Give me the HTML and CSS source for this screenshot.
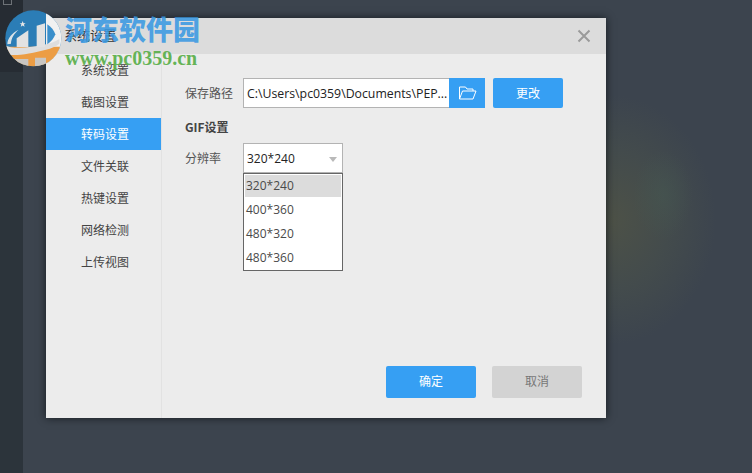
FILE: index.html
```html
<!DOCTYPE html>
<html lang="zh">
<head>
<meta charset="utf-8">
<title>系统设置</title>
<link rel="stylesheet" href="styles.css">
</head>
<body>
<div class="desktop">
  <aside class="strip"><div class="strip-top"><span class="strip-icon"></span></div></aside>
  <main class="stage">
    <div class="glow"></div>
    <div class="glow glow-inner"></div>
    <section class="dialog">
      <header class="dialog-head">
        <h1 class="dialog-title">系统设置</h1>
        <svg class="close" width="14" height="14" viewBox="0 0 14 14"><path d="M1.500 1.500l11 11M12.500 1.500l-11 11" stroke="#9a9a9a" stroke-width="2" fill="none"/></svg>
      </header>
      <div class="dialog-body">
        <nav class="side">
          <a class="side-item">系统设置</a>
          <a class="side-item">截图设置</a>
          <a class="side-item active">转码设置</a>
          <a class="side-item">文件关联</a>
          <a class="side-item">热键设置</a>
          <a class="side-item">网络检测</a>
          <a class="side-item">上传视图</a>
        </nav>
        <div class="content">
          <div class="row path-row">
            <span class="label">保存路径</span>
            <div class="path-box">C:\Users\pc0359\Documents\PEP...</div>
            <button class="folder-btn">
              <svg width="19" height="14" viewBox="0 0 19 14"><path d="M1.500 13V1h6l1.500 2h6v2M1.500 13L4.500 5H18l-3 8z" fill="none" stroke="#fff" stroke-width="1"/></svg>
            </button>
            <button class="btn btn-primary change">更改</button>
          </div>
          <h2 class="section">GIF设置</h2>
          <div class="row res-row">
            <span class="label">分辨率</span>
            <div class="select-wrap">
              <div class="select">320*240<i class="caret"></i></div>
              <ul class="menu">
                <li class="menu-item current">320*240</li>
                <li class="menu-item">400*360</li>
                <li class="menu-item">480*320</li>
                <li class="menu-item">480*360</li>
              </ul>
            </div>
          </div>
          <footer class="actions">
            <button class="btn btn-primary wide">确定</button>
            <button class="btn btn-muted wide">取消</button>
          </footer>
        </div>
      </div>
    </section>
  </main>
  <div class="mark">
    <svg class="mark-logo" width="70" height="65" viewBox="0 0 210 195">
      <defs><clipPath id="disc"><circle cx="100" cy="100" r="84"/></clipPath></defs>
      <g clip-path="url(#disc)">
        <rect width="210" height="195" fill="#2b7db6"/>
        <rect x="138" y="0" width="72" height="195" fill="#f1f1f1"/>
        <path d="M0 125h210v75H0z" fill="#ec9d44"/>
        <path d="M45 162h40v35H45z" fill="#c9c6c2"/>
        <path d="M105 158h33v40h-33z" fill="#c9c6c2"/>
        <path d="M14 118C30 134 85 130 138 118c14-3 28-8 40-16v14c-10 8-24 14-40 18-36 9-80 18-104 16-10-2-18-12-20-32z" fill="#dedede"/>
        <path d="M22 118c0-18 14-34 34-44-14 12-23 26-23 42z" fill="#d9e2e8"/>
        <path d="M50 100L85 76v50H50z" fill="#e2e2e2"/>
        <path d="M110 62l25-7v71h-25z" fill="#e2e2e2"/>
        <path d="M142 58c12 8 20 18 24 30-4 12-12 22-24 30z" fill="#3a8fcb"/>
        <path d="M68 48l2.500 6.500 6.500.2-5.100 4.100 1.800 6.400-5.700-3.700-5.700 3.700 1.800-6.400-5.100-4.100 6.500-.2z" fill="#e6e6e6"/>
      </g>
    </svg>
    <div class="mark-text">
      <span class="mark-name">河东软件园</span>
      <span class="mark-url">www.pc0359.cn</span>
    </div>
  </div>
</div>
</body>
</html>
```

FILE: styles.css
```css
* { box-sizing: border-box; }
html, body { margin: 0; padding: 0; }
body {
  width: 752px;
  height: 473px;
  overflow: hidden;
  font-family: "Noto Sans CJK SC", "Liberation Sans", sans-serif;
  font-size: 13px;
}
.desktop { position: relative; display: flex; width: 752px; height: 473px; background: #3c444e; }
.strip { width: 23px; flex: none; background: #2c343b; }
.strip-top { height: 72px; background: #262c33; position: relative; }
.strip-icon { display: block; width: 9px; height: 5px; margin-left: 3px; border: 1px solid #6d7277; border-top: 0; }
.stage { flex: 1; position: relative; padding: 18px 0 0 23px; }
.glow {
  position: absolute;
  left: 483px; top: 95px;
  width: 210px; height: 250px;
  border-radius: 50%;
  background: radial-gradient(closest-side, rgba(100, 100, 62, .42), rgba(84, 92, 72, .3) 55%, rgba(60, 68, 78, 0));
}
.glow-inner {
  left: 610px; top: 150px;
  width: 60px; height: 90px;
  background: radial-gradient(closest-side, rgba(70, 90, 82, .45), rgba(70, 90, 82, 0));
}
.dialog {
  position: relative;
  width: 560px;
  height: 400px;
  background: #ececec;
  box-shadow: 0 0 8px rgba(10, 14, 18, .75);
  display: flex;
  flex-direction: column;
}
.dialog-head {
  height: 36px;
  flex: none;
  background: #dcdcdc;
  display: flex;
  align-items: center;
  justify-content: space-between;
  padding: 0 15px 0 18px;
}
.dialog-title { margin: -2px 0 0; font-size: 13px; font-weight: 400; color: #333; line-height: 36px; }
.close { display: block; margin-top: -1px; }
.dialog-body { flex: 1; display: flex; min-height: 0; }
.side { width: 116px; flex: none; border-right: 1px solid #e2e2e2; }
.side-item { display: block; height: 32px; line-height: 32px; padding-left: 35px; color: #444; font-size: 12px; }
.side-item.active { background: #369ff3; color: #fff; }
.content { flex: 1; position: relative; padding: 24px 0 0 23px; }
.row { display: flex; align-items: flex-start; }
.label { width: 58px; flex: none; color: #555; font-size: 12px; line-height: 30px; }
.path-row { height: 30px; }
.path-box {
  width: 206px; height: 30px;
  border: 1px solid #b3b3b3; border-right: 0;
  background: #fff;
  padding-left: 3px;
  font: 12.3px/30px "Open Sans", "Liberation Sans", sans-serif;
  color: #222;
  white-space: nowrap;
  overflow: hidden;
}
.folder-btn {
  width: 36px; height: 30px; padding: 0; border: 0;
  background: #369ff3;
  display: flex; align-items: center; justify-content: center;
}
.btn {
  border: 0; border-radius: 2px; padding: 0 0 2px;
  font-family: inherit; font-size: 12px;
}
.btn-primary { background: #369ff3; color: #fff; }
.btn-muted { background: #d3d3d3; color: #777; }
.change { width: 70px; height: 30px; margin-left: 8px; }
.section { margin: 10px 0 0; font: 700 12px/18px "Noto Sans CJK SC", "Liberation Sans", sans-serif; color: #444; }
.res-row { margin-top: 7px; }
.select-wrap { position: relative; width: 100px; }
.select {
  height: 30px;
  border: 1px solid #b3b3b3;
  background: #fff;
  padding-left: 3px;
  font: 12px/30px "Open Sans", "Liberation Sans", sans-serif;
  color: #222;
  position: relative;
}
.caret {
  position: absolute; right: 5px; top: 13px;
  border-left: 4px solid transparent; border-right: 4px solid transparent;
  border-top: 5px solid #b9b9b9;
}
.menu {
  list-style: none; margin: 0; padding: 1px;
  height: 98px;
  border: 1px solid #666;
  background: #fff;
  font: 12px/26px "Open Sans", "Liberation Sans", sans-serif;
  color: #4a4a4a;
}
.menu-item { height: 24px; padding-left: 1px; }
.menu-item.current { height: 22px; line-height: 22px; background: #dcdcdc; }
.actions { position: absolute; right: 24px; bottom: 20px; display: flex; gap: 16px; }
.wide { width: 90px; height: 32px; padding-bottom: 3px; }
.mark { position: absolute; left: 0; top: 5px; display: flex; pointer-events: none; }
.mark-logo { display: block; flex: none; }
.mark-text { display: flex; flex-direction: column; margin-left: -5px; font-family: "Liberation Serif", "Noto Sans CJK SC", serif; font-weight: 700; }
.mark-name { font: 900 27px/36px "Noto Sans CJK SC", serif; color: rgba(58, 153, 226, .88); margin-top: 6px; }
.mark-url { font-size: 20px; line-height: 20px; color: rgba(92, 176, 76, .95); margin-top: 1px; }
```
